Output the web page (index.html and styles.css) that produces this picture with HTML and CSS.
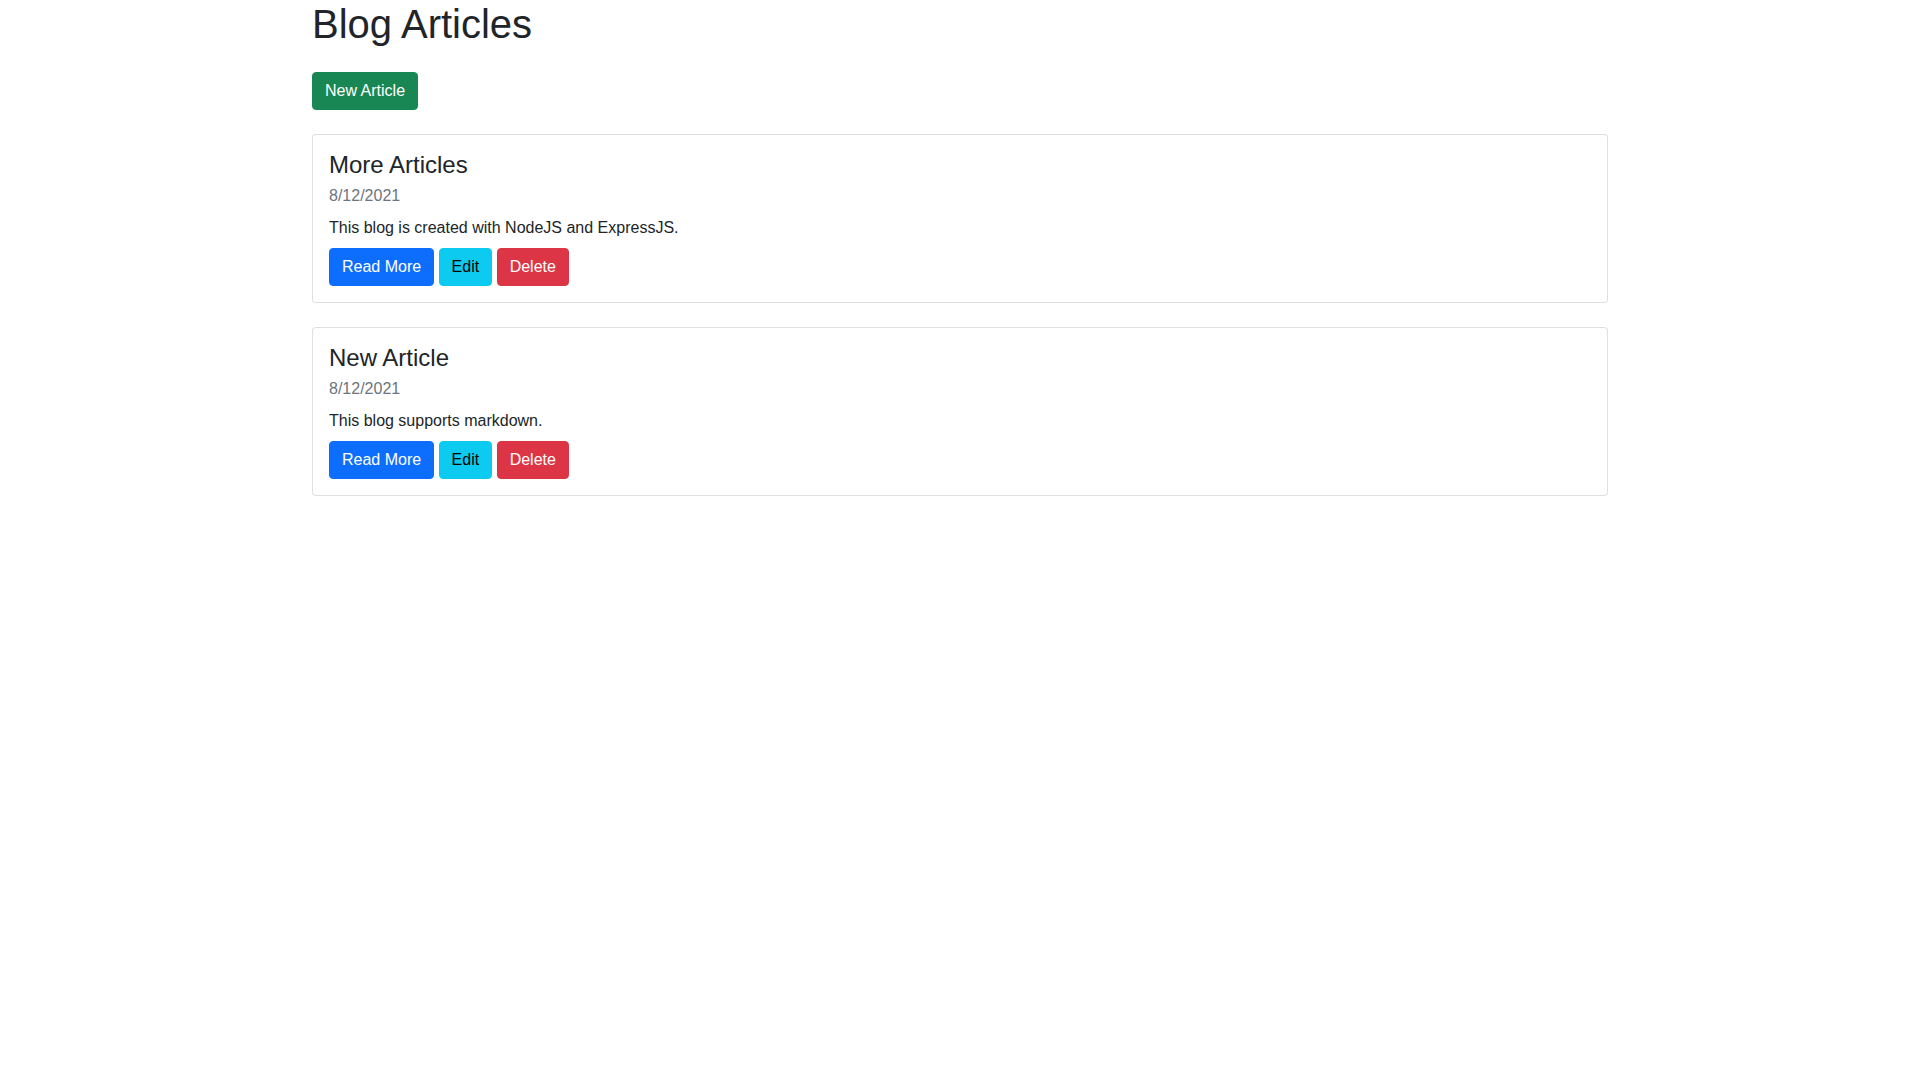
FILE: index.html
```html
<!DOCTYPE html>
<html lang="en">
<head>
<meta charset="utf-8">
<title>Blog</title>
<link rel="stylesheet" href="styles.css">
</head>
<body>
<div class="container">
  <h1 class="page-title">Blog Articles</h1>
  <a href="#" class="btn btn-success">New Article</a>

  <div class="card">
    <div class="card-body">
      <h4 class="card-title">More Articles</h4>
      <div class="card-subtitle">8/12/2021</div>
      <div class="card-text">This blog is created with NodeJS and ExpressJS.</div>
      <a href="#" class="btn btn-primary">Read More</a>
      <a href="#" class="btn btn-info">Edit</a>
      <button class="btn btn-danger">Delete</button>
    </div>
  </div>

  <div class="card">
    <div class="card-body">
      <h4 class="card-title">New Article</h4>
      <div class="card-subtitle">8/12/2021</div>
      <div class="card-text">This blog supports markdown.</div>
      <a href="#" class="btn btn-primary">Read More</a>
      <a href="#" class="btn btn-info">Edit</a>
      <button class="btn btn-danger">Delete</button>
    </div>
  </div>
</div>
</body>
</html>
```

FILE: styles.css
```css
*, *::before, *::after { box-sizing: border-box; }

body {
  margin: 0;
  font-family: "Liberation Sans", Arial, sans-serif;
  font-size: 16px;
  line-height: 1.5;
  color: #212529;
  background: #fff;
}

.container {
  width: 100%;
  max-width: 1320px;
  margin: 0 auto;
  padding: 0 12px;
}

.page-title {
  margin: 0 0 24px;
  font-size: 40px;
  font-weight: 500;
  line-height: 1.2;
}

.btn {
  display: inline-block;
  padding: 6px 12px;
  font-family: inherit;
  font-size: 16px;
  font-weight: 400;
  line-height: 1.5;
  text-align: center;
  text-decoration: none;
  vertical-align: middle;
  border: 1px solid transparent;
  border-radius: 4px;
  cursor: pointer;
}

.btn-success { color: #fff; background: #198754; border-color: #198754; }
.btn-primary { color: #fff; background: #0d6efd; border-color: #0d6efd; }
.btn-info { color: #000; background: #0dcaf0; border-color: #0dcaf0; }
.btn-danger { color: #fff; background: #dc3545; border-color: #dc3545; }

.card {
  margin-top: 24px;
  border: 1px solid rgba(0, 0, 0, 0.125);
  border-radius: 4px;
  background: #fff;
}

.card-body {
  padding: 16px;
}

.card-title {
  margin: 0 0 8px;
  font-size: 24px;
  font-weight: 500;
  line-height: 1.2;
}

.card-subtitle {
  margin-top: -4px;
  margin-bottom: 8px;
  color: #6c757d;
}

.card-text {
  margin-bottom: 8px;
}
```
